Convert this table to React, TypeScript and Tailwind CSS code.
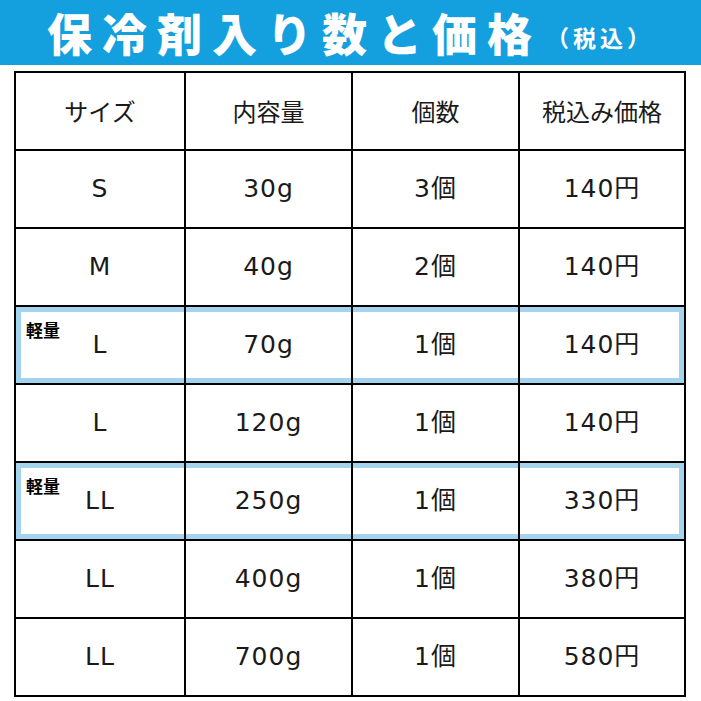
const rows = [
  { size: "S", amount: "30g", count: "3個", price: "140円", light: false },
  { size: "M", amount: "40g", count: "2個", price: "140円", light: false },
  { size: "L", amount: "70g", count: "1個", price: "140円", light: true },
  { size: "L", amount: "120g", count: "1個", price: "140円", light: false },
  { size: "LL", amount: "250g", count: "1個", price: "330円", light: true },
  { size: "LL", amount: "400g", count: "1個", price: "380円", light: false },
  { size: "LL", amount: "700g", count: "1個", price: "580円", light: false },
];

const cols = "grid grid-cols-[170px_167px_167px_1fr]";
const font = { fontFamily: '"DejaVu Sans", "Noto Sans CJK JP", sans-serif' };

export default function App() {
  return (
    <div className="w-[701px] h-[701px] bg-white" style={{ fontFamily: '"Noto Sans CJK JP", sans-serif' }}>
      {/* Title bar */}
      <div className="h-[65px] bg-[#14a0de] flex items-center justify-center text-white">
        <span className="text-[45px] font-black tracking-[10px] leading-[1.2]">保冷剤入り数と価格</span>
        <span className="text-[23px] font-bold leading-[1.2] mt-[10px] ml-[4px] tracking-[4px]">（税込）</span>
      </div>

      {/* Table */}
      <div className="mt-[6px] ml-[14px] w-[672px] border-2 border-black text-[#1a1a1a]">
        <div className={`${cols} h-[78px] border-b-2 border-black text-[24px]`}>
          {["サイズ", "内容量", "個数", "税込み価格"].map((h, i) => (
            <div
              key={h}
              className={`flex items-center justify-center ${i < 3 ? "border-r-2 border-black" : ""}`}
            >
              {h}
            </div>
          ))}
        </div>

        {rows.map((r, idx) => {
          const last = idx === rows.length - 1;
          return (
            <div
              key={idx}
              className={`relative ${cols} ${last ? "h-[76px]" : "h-[78px] border-b-2 border-black"}`}
            >
              {r.light && (
                <div className="absolute inset-0 border-[5px] border-[#a4d3ee] pointer-events-none" />
              )}
              {[r.size, r.amount, r.count, r.price].map((v, i) => (
                <div
                  key={i}
                  className={`relative flex items-center justify-center text-[25px] tracking-[1px] ${
                    i < 3 ? "border-r-2 border-black" : ""
                  }`}
                  style={font}
                >
                  {i === 0 && r.light && (
                    <span
                      className="absolute left-[10px] top-[10px] text-[17px] font-bold tracking-normal text-black"
                      style={{ fontFamily: '"Noto Sans CJK JP", sans-serif' }}
                    >
                      軽量
                    </span>
                  )}
                  {v}
                </div>
              ))}
            </div>
          );
        })}
      </div>
    </div>
  );
}
